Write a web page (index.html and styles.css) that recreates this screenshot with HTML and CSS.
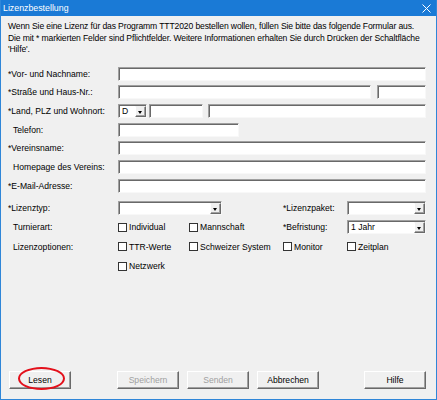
FILE: index.html
```html
<!DOCTYPE html>
<html lang="de">
<head>
<meta charset="utf-8">
<title>Lizenzbestellung</title>
<link rel="stylesheet" href="styles.css">
</head>
<body>
<div class="window">
  <div class="titlebar">
    <span class="title">Lizenzbestellung</span>
    <svg class="close" width="9" height="9" viewBox="0 0 9 9"><path d="M0.5 0.5 L8.5 8.5 M8.5 0.5 L0.5 8.5" stroke="#fff" stroke-width="1" fill="none"/></svg>
  </div>
  <div class="content">
    <p class="intro">Wenn Sie eine Lizenz für das Programm TTT2020 bestellen wollen, füllen Sie bitte das folgende Formular aus.<br>Die mit * markierten Felder sind Pflichtfelder. Weitere Informationen erhalten Sie durch Drücken der Schaltfläche<br>'Hilfe'.</p>

    <div class="form">
      <div class="row"><span class="lbl">*Vor- und Nachname:</span><div class="input grow"></div></div>
      <div class="row"><span class="lbl">*Straße und Haus-Nr.:</span><div class="input grow"></div><div class="input w-nr"></div></div>
      <div class="row"><span class="lbl">*Land, PLZ und Wohnort:</span>
        <div class="select w-land"><span class="val">D</span><span class="arrow"></span></div>
        <div class="input w-plz"></div>
        <div class="input grow"></div>
      </div>
      <div class="row"><span class="lbl ind">Telefon:</span><div class="input w-tel"></div></div>
      <div class="row"><span class="lbl">*Vereinsname:</span><div class="input grow"></div></div>
      <div class="row"><span class="lbl ind">Homepage des Vereins:</span><div class="input grow"></div></div>
      <div class="row"><span class="lbl">*E-Mail-Adresse:</span><div class="input grow"></div></div>
    </div>

    <div class="grid">
      <span class="lbl">*Lizenztyp:</span>
      <div class="select typ"><span class="val"></span><span class="arrow"></span></div>
      <span class="lbl c4">*Lizenzpaket:</span>
      <div class="select c5"><span class="val"></span><span class="arrow"></span></div>

      <span class="lbl ind">Turnierart:</span>
      <label class="cb"><span class="box"></span>Individual</label>
      <label class="cb"><span class="box"></span>Mannschaft</label>
      <span class="lbl">*Befristung:</span>
      <div class="select"><span class="val">1 Jahr</span><span class="arrow"></span></div>

      <span class="lbl ind">Lizenzoptionen:</span>
      <label class="cb"><span class="box"></span>TTR-Werte</label>
      <label class="cb"><span class="box"></span>Schweizer System</label>
      <label class="cb"><span class="box"></span>Monitor</label>
      <label class="cb"><span class="box"></span>Zeitplan</label>

      <label class="cb c2"><span class="box"></span>Netzwerk</label>
    </div>

    <div class="buttons">
      <button class="btn lesen">Lesen<span class="mark"></span></button>
      <button class="btn speichern" disabled>Speichern</button>
      <button class="btn gap8" disabled>Senden</button>
      <button class="btn gap8">Abbrechen</button>
      <button class="btn hilfe">Hilfe</button>
    </div>
  </div>
</div>
</body>
</html>
```
FILE: styles.css
```css
html, body {
  margin: 0;
  padding: 0;
}

body {
  font-family: "Liberation Sans", Arial, sans-serif;
  font-size: 8.6px;
  color: #000;
}

.window {
  width: 437px;
  height: 400px;
  box-sizing: border-box;
  border: 1px solid #2f86d8;
  border-top: 0;
  background: #f0f0f0;
  display: flex;
  flex-direction: column;
}

.titlebar {
  height: 16px;
  flex-shrink: 0;
  background: #1a7ad6;
  color: #fff;
  display: flex;
  align-items: center;
  justify-content: space-between;
  padding: 0 5px 0 2px;
  font-size: 8.8px;
}

.close {
  display: block;
}

.content {
  flex: 1;
  display: flex;
  flex-direction: column;
  padding: 5px 10px 10px 7px;
}

.intro {
  margin: 0;
  line-height: 11.5px;
  white-space: nowrap;
  letter-spacing: -0.135px;
}

.form {
  margin-top: 11px;
  display: flex;
  flex-direction: column;
  gap: 4.7px;
}

.row {
  display: flex;
  align-items: center;
  height: 14px;
}

.lbl {
  width: 110px;
  flex-shrink: 0;
  white-space: nowrap;
}

.ind {
  padding-left: 5px;
  box-sizing: border-box;
}

.input,
.select {
  height: 14px;
  box-sizing: border-box;
  background: #fff;
  border: 1px solid;
  border-color: #a0a0a0 #f8f8f8 #f8f8f8 #a0a0a0;
  box-shadow: inset 1px 1px 0 #696969;
}

.grow {
  flex: 1;
}

.w-nr {
  width: 49px;
  margin-left: 6px;
}

.w-land {
  width: 29px;
}

.w-plz {
  width: 54px;
  margin-left: 2px;
  margin-right: 5px;
}

.w-tel {
  width: 121px;
}

.select {
  display: flex;
  align-items: stretch;
  padding: 1px 0 0 1px;
}

.select .val {
  flex: 1;
  padding-left: 2px;
  line-height: 11px;
  white-space: nowrap;
}

.arrow {
  width: 11px;
  box-sizing: border-box;
  background: #f0f0f0;
  border: 1px solid;
  border-color: #f0f0f0 #696969 #696969 #fff;
  box-shadow: inset -1px -1px 0 #a0a0a0;
  position: relative;
}

.arrow::after {
  content: "";
  position: absolute;
  left: 2px;
  top: 4px;
  border-left: 2.5px solid transparent;
  border-right: 2.5px solid transparent;
  border-top: 3px solid #000;
}

.grid {
  margin-top: 8px;
  display: grid;
  grid-template-columns: 110px 71px 94px 64px 79px;
  grid-template-rows: 14px 14px 14px 14px;
  row-gap: 5.6px;
  align-items: center;
}

.typ {
  grid-column: 2 / 4;
  width: 104px;
}

.c2 {
  grid-column: 2;
}

.c4 {
  grid-column: 4;
  width: auto;
}

.grid .lbl {
  width: auto;
}

.cb {
  display: flex;
  align-items: center;
  white-space: nowrap;
}

.box {
  width: 9px;
  height: 9px;
  box-sizing: border-box;
  border: 1px solid #333;
  background: #fff;
  margin-right: 2px;
  flex-shrink: 0;
}

.buttons {
  margin-top: auto;
  display: flex;
  height: 18px;
  padding-left: 1px;
}

.btn {
  width: 62px;
  height: 18px;
  padding: 0;
  margin: 0;
  box-sizing: border-box;
  font-family: "Liberation Sans", Arial, sans-serif;
  font-size: 8.6px;
  color: #000;
  background: #f0f0f0;
  border: 1px solid;
  border-color: #fff #696969 #696969 #fff;
  box-shadow: inset -1px -1px 0 #a0a0a0;
  border-radius: 0;
  position: relative;
}

.btn:disabled {
  color: #a0a0a0;
}

.speichern {
  margin-left: 46px;
}

.gap8 {
  margin-left: 8px;
}

.hilfe {
  margin-left: auto;
}

.mark {
  position: absolute;
  left: 8px;
  top: -5px;
  width: 47px;
  height: 23px;
  box-sizing: border-box;
  border: 2px solid #e3101b;
  border-radius: 50%;
}
```
